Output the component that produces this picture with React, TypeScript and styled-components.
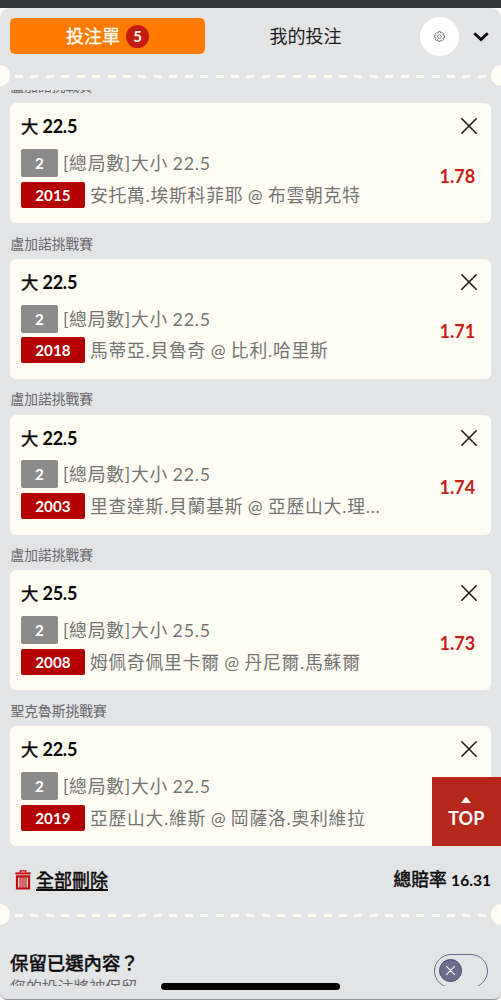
import React from 'react';
import styled, { createGlobalStyle } from 'styled-components';

const Global = createGlobalStyle`
  * { box-sizing: border-box; }
  html, body { margin: 0; padding: 0; }
  body { background: #323639; font-family: Lato, "Noto Sans CJK TC", sans-serif; color: #0b0b0c; }
  button { font: inherit; color: inherit; border: 0; padding: 0; background: none; }
  svg { display: block; }
`;

const Screen = styled.div`
  position: relative;
  width: 501px;
  height: 1000px;
  overflow: hidden;
  display: flex;
  flex-direction: column;
  background: linear-gradient(#323639 0 8px, #fafafa 8px);
  padding-top: 8px;
`;

const Sheet = styled.div`
  height: 992px;
  display: flex;
  flex-direction: column;
  overflow: hidden;
  background: #e3e4e6;
  border-radius: 10px 10px 7px 7px;
  border-bottom: 1px solid #929397;
`;

const Header = styled.header`
  height: 56.5px;
  flex: none;
  padding: 10px 10px 0;
  display: flex;
  align-items: flex-start;
`;

const Tab = styled.button<{ $active?: boolean }>`
  width: ${(p) => (p.$active ? 195 : 201)}px;
  height: 36px;
  display: flex;
  align-items: center;
  justify-content: center;
  gap: 6px;
  border-radius: 5px;
  font-size: 18px;
  line-height: 37px;
  color: ${(p) => (p.$active ? '#fffdf4' : '#1b1c20')};
  background: ${(p) => (p.$active ? '#ff7a00' : 'transparent')};
  -webkit-text-stroke: ${(p) => (p.$active ? 0.3 : 0)}px currentColor;
`;

const Count = styled.span`
  width: 23px;
  height: 23px;
  border-radius: 50%;
  background: #c41a10;
  font-size: 15px;
  font-weight: 700;
  line-height: 23px;
  text-align: center;
  -webkit-text-stroke: 0;
`;

const Settings = styled.button`
  width: 39px;
  height: 39px;
  margin: -1px 0 0 13.5px;
  border-radius: 50%;
  background: #fff;
  display: grid;
  place-items: center;
`;

const Collapse = styled.button`
  height: 38px;
  margin-left: 14.5px;
  display: grid;
  place-items: center;
`;

const Perforation = styled.div`
  height: 21px;
  flex: none;
  display: flex;
  align-items: center;
  justify-content: space-between;
`;

const Notch = styled.span<{ $right?: boolean }>`
  width: 10.3px;
  height: 21px;
  background: #fffdf3;
  border-radius: ${(p) => (p.$right ? '10.3px 0 0 10.3px' : '0 10.3px 10.3px 0')};
`;

const Dashes = styled.span`
  width: 471px;
  height: 3px;
  margin-top: 2px;
  background: repeating-linear-gradient(90deg, #fffdf3 0 8px, transparent 8px 15.43px);
`;

const Body = styled.main`
  height: 896px;
  margin-top: 4.5px;
  overflow: hidden;
  flex: none;
`;

const List = styled.div`
  margin-top: -14.8px;
  padding: 0 10px 0 10.4px;
`;

const League = styled.h3`
  height: 35.8px;
  margin: 0;
  padding-top: 2.5px;
  font-size: 13.75px;
  line-height: 36px;
  font-weight: 400;
  color: #66676a;
`;

const FirstLeague = styled(League)`
  height: 27.8px;
  padding-top: 0;
  line-height: 22px;
`;

const Card = styled.article`
  height: 120px;
  padding: 9px 10.5px 0;
  border-radius: 6px;
  background: #fffdf3;
  display: flex;
  justify-content: space-between;
`;

const Pick = styled.div`
  width: 370px;
`;

const Title = styled.h2`
  height: 28px;
  margin: 0 0 8.8px;
  font-size: 17.2px;
  line-height: 28px;
  font-weight: 400;
  color: #050505;
  -webkit-text-stroke: 0.5px currentColor;
`;

const Line = styled.span`
  font-size: 18px;
  font-weight: 700;
  letter-spacing: -0.25px;
  -webkit-text-stroke: 0;
`;

const Detail = styled.div`
  display: flex;
  align-items: center;
  height: 28px;
  margin-bottom: 3.9px;
`;

const Tag = styled.span<{ $red?: boolean }>`
  width: ${(p) => (p.$red ? 64 : 37)}px;
  height: ${(p) => (p.$red ? 26 : 28)}px;
  margin-right: 5px;
  flex: none;
  border-radius: 2px;
  background: ${(p) => (p.$red ? '#b40000' : '#8b8b8b')};
  color: #fff;
  font-size: 15.2px;
  font-weight: 700;
  line-height: ${(p) => (p.$red ? 26 : 28)}px;
  text-align: center;
`;

const Match = styled.span`
  font-size: 17.8px;
  letter-spacing: 0.77px;
  word-spacing: -0.8px;
  line-height: 28px;
  white-space: nowrap;
  color: #737373;
`;

const Side = styled.div`
  display: flex;
  flex-direction: column;
  align-items: flex-end;
  padding: 6px 3.6px 0 0;
`;

const Odds = styled.span`
  margin: 26.5px 1.8px 0 0;
  font-size: 18px;
  font-weight: 700;
  line-height: 30px;
  color: #c8201a;
`;

const Summary = styled.section`
  height: 57.5px;
  padding: 5px 10px 0 15px;
  display: flex;
  align-items: flex-start;
  justify-content: space-between;
  line-height: 58px;
`;

const DeleteAll = styled.button`
  display: flex;
  align-items: center;
  gap: 5px;
  font-size: 18px;
  text-decoration: underline;
  text-decoration-thickness: 1.5px;
  text-underline-offset: 2px;
  -webkit-text-stroke: 0.5px currentColor;
`;

const Total = styled.span`
  font-size: 17.7px;
  -webkit-text-stroke: 0.5px currentColor;
`;

const TotalValue = styled.span`
  font-size: 15.6px;
  font-weight: 700;
  -webkit-text-stroke: 0;
`;

const Keep = styled.section`
  height: 64px;
  padding: 23px 13px 0 10px;
  display: flex;
  justify-content: space-between;
  align-items: flex-start;
`;

const KeepTitle = styled.h2`
  margin: 0;
  font-size: 18.4px;
  font-weight: 400;
  line-height: 30px;
  -webkit-text-stroke: 0.6px currentColor;
`;

const KeepNote = styled.p`
  margin: 0;
  font-size: 15.9px;
  line-height: 17px;
  color: #66676a;
`;

const Switch = styled.button`
  width: 54px;
  height: 34px;
  margin-top: 6px;
  padding-left: 4px;
  border: 1px solid #6d6b91;
  border-radius: 17px;
  display: flex;
  align-items: center;
`;

const Knob = styled.span`
  width: 23px;
  height: 23px;
  border-radius: 50%;
  border: 1px solid #494875;
  background: #6e6d8b;
  display: grid;
  place-items: center;
`;

const TopButton = styled.button`
  position: absolute;
  right: 0;
  top: 776.5px;
  width: 69.5px;
  height: 69.5px;
  padding-top: 3px;
  background: #b5261c;
  color: #fffdf7;
  display: flex;
  flex-direction: column;
  align-items: center;
  justify-content: center;
  gap: 4px;
  font-size: 18px;
  font-weight: 700;
  line-height: 22px;
`;

const HomeBar = styled.div`
  position: absolute;
  left: 161px;
  bottom: 10px;
  width: 179px;
  height: 7px;
  border-radius: 4px;
  background: #000;
`;

const Cross = ({ size, color, width }: { size: number; color: string; width: number }) => (
  <svg width={size} height={size} viewBox="0 0 16 16" stroke={color} strokeWidth={width} strokeLinecap="round">
    <path d="M.8.8 15.2 15.2M15.2.8.8 15.2" />
  </svg>
);

const Divider = () => (
  <Perforation>
    <Notch />
    <Dashes />
    <Notch $right />
  </Perforation>
);

const bets = [
  { league: '盧加諾挑戰賽', line: '22.5', id: '2015', match: '安托萬.埃斯科菲耶 @ 布雲朝克特', odds: '1.78' },
  { league: '盧加諾挑戰賽', line: '22.5', id: '2018', match: '馬蒂亞.貝魯奇 @ 比利.哈里斯', odds: '1.71' },
  { league: '盧加諾挑戰賽', line: '22.5', id: '2003', match: '里查達斯.貝蘭基斯 @ 亞歷山大.理...', odds: '1.74' },
  { league: '盧加諾挑戰賽', line: '25.5', id: '2008', match: '姆佩奇佩里卡爾 @ 丹尼爾.馬蘇爾', odds: '1.73' },
  { league: '聖克魯斯挑戰賽', line: '22.5', id: '2019', match: '亞歷山大.維斯 @ 岡薩洛.奧利維拉', odds: '' },
];

export default function App() {
  return (
    <Screen>
      <Global />
      <Sheet>
        <Header>
          <Tab $active>
            投注單<Count>5</Count>
          </Tab>
          <Tab>我的投注</Tab>
          <Settings aria-label="設定">
            <svg width="11" height="11" viewBox="0 0 22 22" fill="none" stroke="#555" strokeWidth="1.5" strokeLinejoin="round">
              <path d="M8.6 3.6 9 1.2h4l.4 2.4 1.2.5 2-1.4 2.8 2.8-1.4 2 .5 1.2 2.3.3v4l-2.3.4-.5 1.2 1.4 2-2.8 2.8-2-1.4-1.2.5-.4 2.3H9l-.4-2.3-1.2-.5-2 1.4-2.8-2.8 1.4-2-.5-1.2-2.3-.4V9l2.3-.3.5-1.2-1.4-2 2.8-2.8 2 1.4z" />
              <circle cx="11" cy="11" r="3.6" />
            </svg>
          </Settings>
          <Collapse aria-label="收合">
            <svg width="16" height="10" viewBox="0 0 16 10" fill="none" stroke="#08080a" strokeWidth="2.8">
              <path d="m1.3 1.3 6.7 6.3 6.7-6.3" />
            </svg>
          </Collapse>
        </Header>
        <Divider />
        <Body>
          <List>
            {bets.map((bet, i) => {
              const Heading = i === 0 ? FirstLeague : League;
              return (
                <React.Fragment key={bet.id}>
                  <Heading>{bet.league}</Heading>
                  <Card>
                    <Pick>
                      <Title>
                        大 <Line>{bet.line}</Line>
                      </Title>
                      <Detail>
                        <Tag>2</Tag>
                        <Match>[總局數]大小 {bet.line}</Match>
                      </Detail>
                      <Detail>
                        <Tag $red>{bet.id}</Tag>
                        <Match>{bet.match}</Match>
                      </Detail>
                    </Pick>
                    <Side>
                      <Cross size={16} color="#151515" width={1.5} />
                      <Odds>{bet.odds}</Odds>
                    </Side>
                  </Card>
                </React.Fragment>
              );
            })}
          </List>
          <Summary>
            <DeleteAll>
              <svg width="16" height="20" viewBox="0 0 16 20" fill="none" stroke="#c3080e">
                <path d="M.3 3.4h15.4" strokeWidth="2" />
                <path d="M5.3 2.6V.9h5.4v1.7" strokeWidth="1.3" />
                <path d="M2 6.3h12v12.2H2z" strokeWidth="2.2" />
                <path d="M5.1 7v11M7.1 7v11M9 7v11M11 7v11" strokeWidth="1.1" />
              </svg>
              全部刪除
            </DeleteAll>
            <Total>
              總賠率 <TotalValue>16.31</TotalValue>
            </Total>
          </Summary>
          <Divider />
          <Keep>
            <div>
              <KeepTitle>保留已選內容？</KeepTitle>
              <KeepNote>您的投注將被保留</KeepNote>
            </div>
            <Switch aria-label="保留已選內容">
              <Knob>
                <Cross size={9} color="#fff" width={1.8} />
              </Knob>
            </Switch>
          </Keep>
        </Body>
      </Sheet>
      <TopButton>
        <svg width="10" height="6" viewBox="0 0 10 6" fill="#fffdf7">
          <path d="M0 6 4.2.6Q5-.2 5.8.6L10 6z" />
        </svg>
        TOP
      </TopButton>
      <HomeBar />
    </Screen>
  );
}
